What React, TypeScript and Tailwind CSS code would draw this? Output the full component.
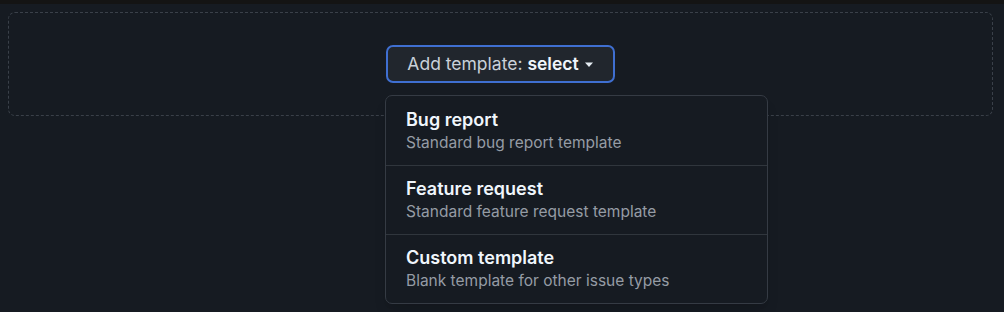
import React from 'react';

const templates = [
  { title: 'Bug report', desc: 'Standard bug report template' },
  { title: 'Feature request', desc: 'Standard feature request template' },
  { title: 'Custom template', desc: 'Blank template for other issue types' },
];

export default function App() {
  return (
    <div
      className="h-[312px] w-full overflow-hidden border-t-[4px] border-[#141414] bg-[#161b22] pt-[8px] pl-[8px] pr-[11px]"
      style={{ fontFamily: 'Inter, "Noto Sans", sans-serif' }}
    >
      <div className="flex h-[104px] justify-center rounded-[7px] border border-dashed border-[#3a4049] pt-[32px]">
        <div className="relative">
          <button className="flex h-[38px] w-[229px] items-center justify-center gap-[5px] rounded-[7px] border-2 border-[#3f6fd1] bg-[#21262d] text-[17.5px] text-[#c9d1d9]">
            <span>
              Add template: <span className="font-semibold text-[#f0f6fc]">select</span>
            </span>
            <svg width="10" height="6" viewBox="0 0 10 6" className="mt-[2px]">
              <path d="M1 0.5h8L5 5z" fill="#e6edf3" />
            </svg>
          </button>
          <div className="absolute left-[-1px] top-[50px] z-10 w-[383px] rounded-[7px] border border-[#353b44] bg-[#161b22] shadow-lg">
            {templates.map((t, i) => (
              <div
                key={t.title}
                className={`flex h-[69px] flex-col justify-center px-[20px] ${i > 0 ? 'border-t border-[#30363d]' : ''}`}
              >
                <div className="text-[18px] font-semibold leading-[24px] text-[#f0f6fc]">{t.title}</div>
                <div className="text-[15.5px] leading-[22px] text-[#959ca5]">{t.desc}</div>
              </div>
            ))}
          </div>
        </div>
      </div>
    </div>
  );
}
